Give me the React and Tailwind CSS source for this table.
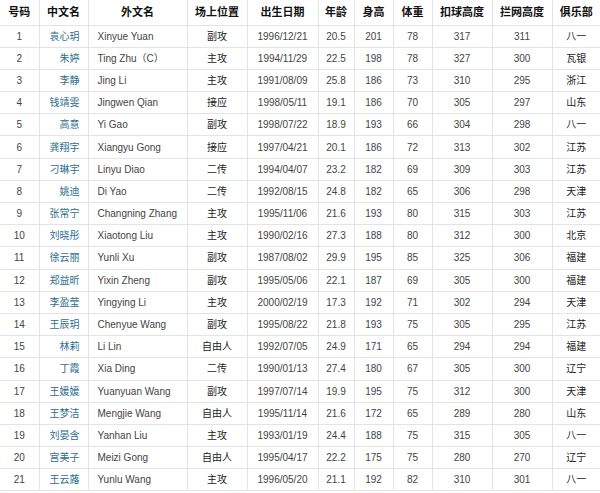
const players = [
    [1, '袁心玥', 'Xinyue Yuan', '副攻', '1996/12/21', '20.5', 201, 78, 317, 311, '八一'],
    [2, '朱婷', 'Ting Zhu（C）', '主攻', '1994/11/29', '22.5', 198, 78, 327, 300, '瓦银'],
    [3, '李静', 'Jing Li', '主攻', '1991/08/09', '25.8', 186, 73, 310, 295, '浙江'],
    [4, '钱靖雯', 'Jingwen Qian', '接应', '1998/05/11', '19.1', 186, 70, 305, 297, '山东'],
    [5, '高意', 'Yi Gao', '副攻', '1998/07/22', '18.9', 193, 66, 304, 298, '八一'],
    [6, '龚翔宇', 'Xiangyu Gong', '接应', '1997/04/21', '20.1', 186, 72, 313, 302, '江苏'],
    [7, '刁琳宇', 'Linyu Diao', '二传', '1994/04/07', '23.2', 182, 69, 309, 303, '江苏'],
    [8, '姚迪', 'Di Yao', '二传', '1992/08/15', '24.8', 182, 65, 306, 298, '天津'],
    [9, '张常宁', 'Changning Zhang', '主攻', '1995/11/06', '21.6', 193, 80, 315, 303, '江苏'],
    [10, '刘晓彤', 'Xiaotong Liu', '主攻', '1990/02/16', '27.3', 188, 80, 312, 300, '北京'],
    [11, '徐云丽', 'Yunli Xu', '副攻', '1987/08/02', '29.9', 195, 85, 325, 306, '福建'],
    [12, '郑益昕', 'Yixin Zheng', '副攻', '1995/05/06', '22.1', 187, 69, 305, 300, '福建'],
    [13, '李盈莹', 'Yingying Li', '主攻', '2000/02/19', '17.3', 192, 71, 302, 294, '天津'],
    [14, '王辰玥', 'Chenyue Wang', '副攻', '1995/08/22', '21.8', 193, 75, 305, 295, '江苏'],
    [15, '林莉', 'Li Lin', '自由人', '1992/07/05', '24.9', 171, 65, 294, 294, '福建'],
    [16, '丁霞', 'Xia Ding', '二传', '1990/01/13', '27.4', 180, 67, 305, 300, '辽宁'],
    [17, '王媛媛', 'Yuanyuan Wang', '副攻', '1997/07/14', '19.9', 195, 75, 312, 300, '天津'],
    [18, '王梦洁', 'Mengjie Wang', '自由人', '1995/11/14', '21.6', 172, 65, 289, 280, '山东'],
    [19, '刘晏含', 'Yanhan Liu', '主攻', '1993/01/19', '24.4', 188, 75, 315, 305, '八一'],
    [20, '宫美子', 'Meizi Gong', '自由人', '1995/04/17', '22.2', 175, 75, 280, 270, '辽宁'],
    [21, '王云蕗', 'Yunlu Wang', '主攻', '1996/05/20', '21.1', 192, 82, 310, 301, '八一'],
];

const headers = ['号码', '中文名', '外文名', '场上位置', '出生日期', '年龄', '身高', '体重', '扣球高度', '拦网高度', '俱乐部'];
const widths = ['w-[39px]', 'w-[49px]', 'w-[99px]', 'w-[60px]', 'w-[71px]', 'w-[36px]', 'w-[39px]', 'w-[39px]', 'w-[60px]', 'w-[60px]', 'w-[48px]'];

const App = () => {
    return (
        <div className="w-[600px] h-[493px] bg-white overflow-hidden font-['Liberation_Sans','Noto_Sans_CJK_SC',sans-serif]">
            <table className="w-[600px] table-fixed border-collapse">
                <colgroup>
                    {widths.map((w, i) => <col key={i} className={w} />)}
                </colgroup>
                <thead>
                    <tr className="h-[25px]">
                        {headers.map((h, i) => (
                            <th key={h} className={`p-0 text-[11px] font-bold text-[#111] text-center border-b border-[#e4e4e4] ${i < 10 ? 'border-r' : ''}`}>
                                {h}
                            </th>
                        ))}
                    </tr>
                </thead>
                <tbody>
                    {players.map((p) => (
                        <tr key={p[0]} className="h-[22.2px] text-[10px] text-[#444]">
                            <td className="p-0 text-center border-b border-r border-[#e4e4e4]">{p[0]}</td>
                            <td className="p-0 pr-[8px] text-right text-[#2d6e8e] border-b border-r border-[#e4e4e4]">{p[1]}</td>
                            <td className="p-0 pl-[9px] text-left border-b border-r border-[#e4e4e4] whitespace-nowrap">{p[2]}</td>
                            <td className="p-0 text-center text-[#222] border-b border-r border-[#e4e4e4]">{p[3]}</td>
                            <td className="p-0 text-center border-b border-r border-[#e4e4e4]">{p[4]}</td>
                            <td className="p-0 text-center border-b border-r border-[#e4e4e4]">{p[5]}</td>
                            <td className="p-0 text-center border-b border-r border-[#e4e4e4]">{p[6]}</td>
                            <td className="p-0 text-center border-b border-r border-[#e4e4e4]">{p[7]}</td>
                            <td className="p-0 text-center border-b border-r border-[#e4e4e4]">{p[8]}</td>
                            <td className="p-0 text-center border-b border-r border-[#e4e4e4]">{p[9]}</td>
                            <td className="p-0 text-center text-[#222] border-b border-[#e4e4e4]">{p[10]}</td>
                        </tr>
                    ))}
                </tbody>
            </table>
        </div>
    );
};

export default App;
